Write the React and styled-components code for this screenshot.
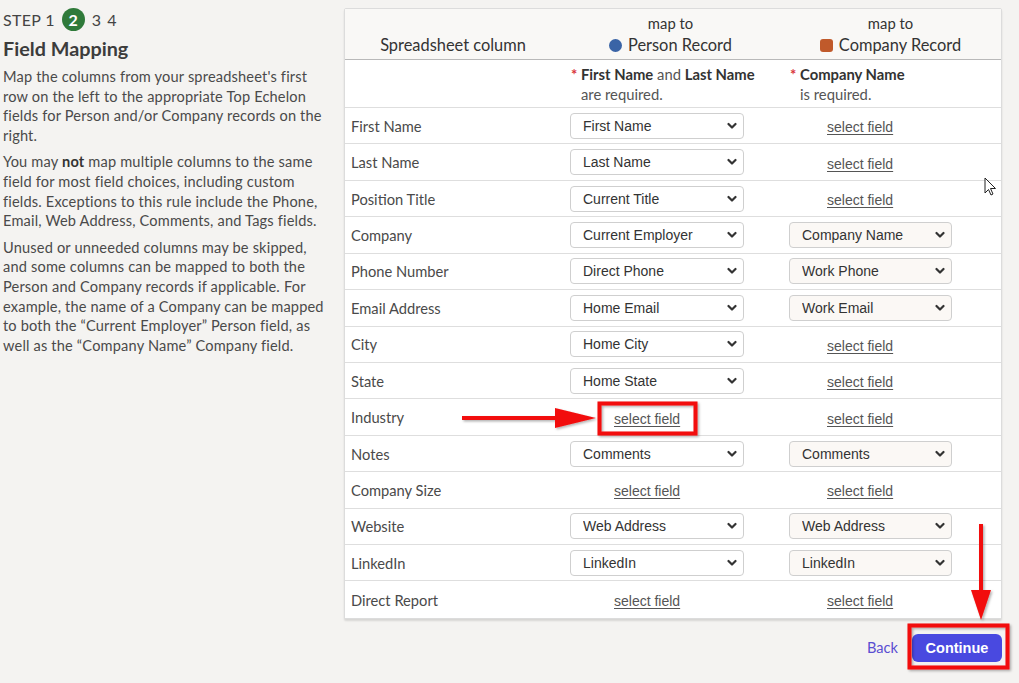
import React from "react";
import styled, { createGlobalStyle } from "styled-components";

const Global = createGlobalStyle`
  html, body { margin: 0; padding: 0; background: #f4f3f1; }
  body { font-family: Lato, "Noto Sans", sans-serif; color: #444; }
  * { box-sizing: border-box; }
`;

const Page = styled.div`
  position: relative;
  width: 1019px;
  height: 683px;
  display: flex;
  align-items: flex-start;
  overflow: hidden;
`;

const Side = styled.div`
  width: 344px;
  padding: 8px 14px 0 3px;
`;

const Steps = styled.div`
  display: flex;
  align-items: center;
  gap: 6px;
  font-size: 16px;
  color: #444;
  letter-spacing: 0.3px;
  height: 22px;
`;

const StepCurrent = styled.span`
  width: 23px;
  height: 23px;
  border-radius: 50%;
  background: #2f7a3a;
  color: #fff;
  font-weight: 700;
  font-size: 16px;
  display: inline-flex;
  align-items: center;
  justify-content: center;
  margin: 0 1px;
`;

const Title = styled.h1`
  margin: 5px 0 6px;
  font-size: 19.8px;
  font-weight: 700;
  color: #3c3c3c;
  line-height: 26px;
`;

const Para = styled.p`
  margin: 0 0 7px;
  font-size: 14.6px;
  line-height: 19.6px;
  letter-spacing: 0.17px;
  color: #4a4a4a;
  b { font-weight: 700; color: #333; }
`;

const Main = styled.div`
  width: 658px;
  padding-top: 8px;
  display: flex;
  flex-direction: column;
  align-items: stretch;
`;

const Panel = styled.div`
  background: #fff;
  border: 1px solid #dcdcdc;
  border-radius: 2px;
  box-shadow: 0 2px 2px rgba(0,0,0,0.12);
`;

const Row = styled.div`
  display: grid;
  grid-template-columns: 216px 219px 1fr;
  align-items: center;
  height: ${p => p.$h}px;
  border-bottom: ${p => (p.$last ? "none" : p.$dark ? "1px solid #b9b9b9" : "1px solid #dedede")};
  background: ${p => p.$bg || "#fff"};
`;

const HeadCol = styled.div`
  text-align: center;
  color: #333;
  font-size: 16.4px;
  line-height: 22px;
  padding-top: ${p => p.$pt || 0}px;
`;

const MapTo = styled.div`
  font-size: 14.8px;
`;

const RecordName = styled.div`
  display: flex;
  align-items: center;
  justify-content: center;
  gap: 6px;
  font-size: 16.4px;
`;

const Dot = styled.span`
  width: 13px;
  height: 13px;
  border-radius: ${p => (p.$square ? "3px" : "50%")};
  background: ${p => p.$color};
  display: inline-block;
`;

const ReqCell = styled.div`
  padding-left: 10px;
  font-size: 14.8px;
  line-height: 20px;
  color: #555;
  white-space: nowrap;
  b { font-weight: 700; color: #333; }
`;

const Star = styled.span`
  color: #d9343a;
  display: inline-block;
  width: 10px;
  font-weight: 700;
`;

const Indent = styled.div`
  padding-left: 10px;
`;

const Label = styled.div`
  padding-left: 6px;
  font-size: 14.7px;
  color: #4a4a4a;
`;

const SelectWrap = styled.div`
  position: relative;
  margin-left: 9px;
  width: ${p => p.$w}px;
  height: 26px;
`;

const Select = styled.select`
  appearance: none;
  -webkit-appearance: none;
  width: 100%;
  height: 100%;
  border: 1px solid #cfcfcf;
  border-radius: 4px;
  background: ${p => p.$bg};
  font-family: "Liberation Sans", Arial, sans-serif;
  font-size: 14px;
  color: #333;
  padding: 0 24px 0 12px;
  outline: none;
`;

const Chevron = styled.svg`
  position: absolute;
  right: 7px;
  top: 9px;
  pointer-events: none;
`;

const LinkCell = styled.div`
  padding-left: ${p => p.$pl}px;
`;

const FieldLink = styled.a`
  font-family: "Liberation Sans", Arial, sans-serif;
  font-size: 14px;
  color: #555;
  text-decoration: underline;
  text-underline-offset: 2px;
  cursor: pointer;
`;

const Footer = styled.div`
  display: flex;
  justify-content: flex-end;
  align-items: center;
  gap: 14px;
  margin-top: 15px;
`;

const Back = styled.a`
  color: #5a4ed1;
  font-size: 14.6px;
`;

const ContinueBtn = styled.button`
  width: 90px;
  height: 28px;
  border: none;
  border-radius: 6px;
  background: #4949e0;
  color: #fff;
  font-family: "Liberation Sans", Arial, sans-serif;
  font-weight: 700;
  font-size: 14.5px;
`;

const Overlay = styled.svg`
  position: absolute;
  left: 0;
  top: 0;
  pointer-events: none;
`;

const rows = [
  ["First Name", "First Name", null],
  ["Last Name", "Last Name", null],
  ["Position Title", "Current Title", null],
  ["Company", "Current Employer", "Company Name"],
  ["Phone Number", "Direct Phone", "Work Phone"],
  ["Email Address", "Home Email", "Work Email"],
  ["City", "Home City", null],
  ["State", "Home State", null],
  ["Industry", null, null],
  ["Notes", "Comments", "Comments"],
  ["Company Size", null, null],
  ["Website", "Web Address", "Web Address"],
  ["LinkedIn", "LinkedIn", "LinkedIn"],
  ["Direct Report", null, null],
];

function Dropdown({ value, width, bg }) {
  return (
    <SelectWrap $w={width}>
      <Select $bg={bg} defaultValue={value}>
        <option>{value}</option>
      </Select>
      <Chevron width="10" height="8" viewBox="0 0 10 8">
        <path d="M1.5 2 L5 5.5 L8.5 2" fill="none" stroke="#333" strokeWidth="2.2" strokeLinecap="round" strokeLinejoin="round" />
      </Chevron>
    </SelectWrap>
  );
}

export default function App() {
  return (
    <>
      <Global />
      <Page>
        <Side>
          <Steps>
            <span>STEP 1</span>
            <StepCurrent>2</StepCurrent>
            <span>3</span>
            <span>4</span>
          </Steps>
          <Title>Field Mapping</Title>
          <Para>
            Map the columns from your spreadsheet's first row on the left to the appropriate Top Echelon fields for Person and/or Company records on the right.
          </Para>
          <Para>
            You may <b>not</b> map multiple columns to the same field for most field choices, including custom fields. Exceptions to this rule include the Phone, Email, Web Address, Comments, and Tags fields.
          </Para>
          <Para>
            Unused or unneeded columns may be skipped, and some columns can be mapped to both the Person and Company records if applicable. For example, the name of a Company can be mapped to both the “Current Employer” Person field, as well as the “Company Name” Company field.
          </Para>
        </Side>
        <Main>
          <Panel>
            <Row $h={51} $dark $bg="#f9f8f6">
              <HeadCol $pt={22}>Spreadsheet column</HeadCol>
              <HeadCol>
                <MapTo>map to</MapTo>
                <RecordName><Dot $color="#3a64a6" />Person Record</RecordName>
              </HeadCol>
              <HeadCol>
                <MapTo>map to</MapTo>
                <RecordName><Dot $square $color="#c05a2b" />Company Record</RecordName>
              </HeadCol>
            </Row>
            <Row $h={48}>
              <div />
              <ReqCell>
                <Star>*</Star><b>First Name</b> and <b>Last Name</b>
                <Indent>are required.</Indent>
              </ReqCell>
              <ReqCell>
                <Star>*</Star><b>Company Name</b>
                <Indent>is required.</Indent>
              </ReqCell>
            </Row>
            {rows.map(([label, person, company], i) => (
              <Row key={label} $h={36.43} $last={i === rows.length - 1}>
                <Label>{label}</Label>
                {person ? (
                  <Dropdown value={person} width={174} bg="#fff" />
                ) : (
                  <LinkCell $pl={53}><FieldLink>select field</FieldLink></LinkCell>
                )}
                {company ? (
                  <Dropdown value={company} width={163} bg="#fbf8f5" />
                ) : (
                  <LinkCell $pl={47}><FieldLink>select field</FieldLink></LinkCell>
                )}
              </Row>
            ))}
          </Panel>
          <Footer>
            <Back>Back</Back>
            <ContinueBtn>Continue</ContinueBtn>
          </Footer>
        </Main>
        <Overlay width="1019" height="683" viewBox="0 0 1019 683">
          <defs>
            <filter id="sh" x="-10%" y="-10%" width="130%" height="130%">
              <feDropShadow dx="1.5" dy="1.5" stdDeviation="1" floodColor="#000" floodOpacity="0.3" />
            </filter>
          </defs>
          <g filter="url(#sh)" fill="#f20d0d" stroke="#f20d0d">
            <line x1="462" y1="418" x2="558" y2="418" strokeWidth="4" />
            <polygon points="555,408 596,418 555,428" stroke="none" />
            <rect x="599.5" y="403.5" width="96" height="30" fill="none" strokeWidth="4" />
            <line x1="981" y1="524" x2="981" y2="592" strokeWidth="4" />
            <polygon points="971,590 991,590 981,620" stroke="none" />
            <rect x="909.5" y="625.5" width="98" height="42" fill="none" strokeWidth="4" />
          </g>
          <path d="M985 178 L985 193 L988.5 189.5 L991 195 L993 194 L990.5 188.5 L995.5 188.5 Z" fill="#fff" stroke="#222" strokeWidth="1" strokeLinejoin="round" />
        </Overlay>
      </Page>
    </>
  );
}
